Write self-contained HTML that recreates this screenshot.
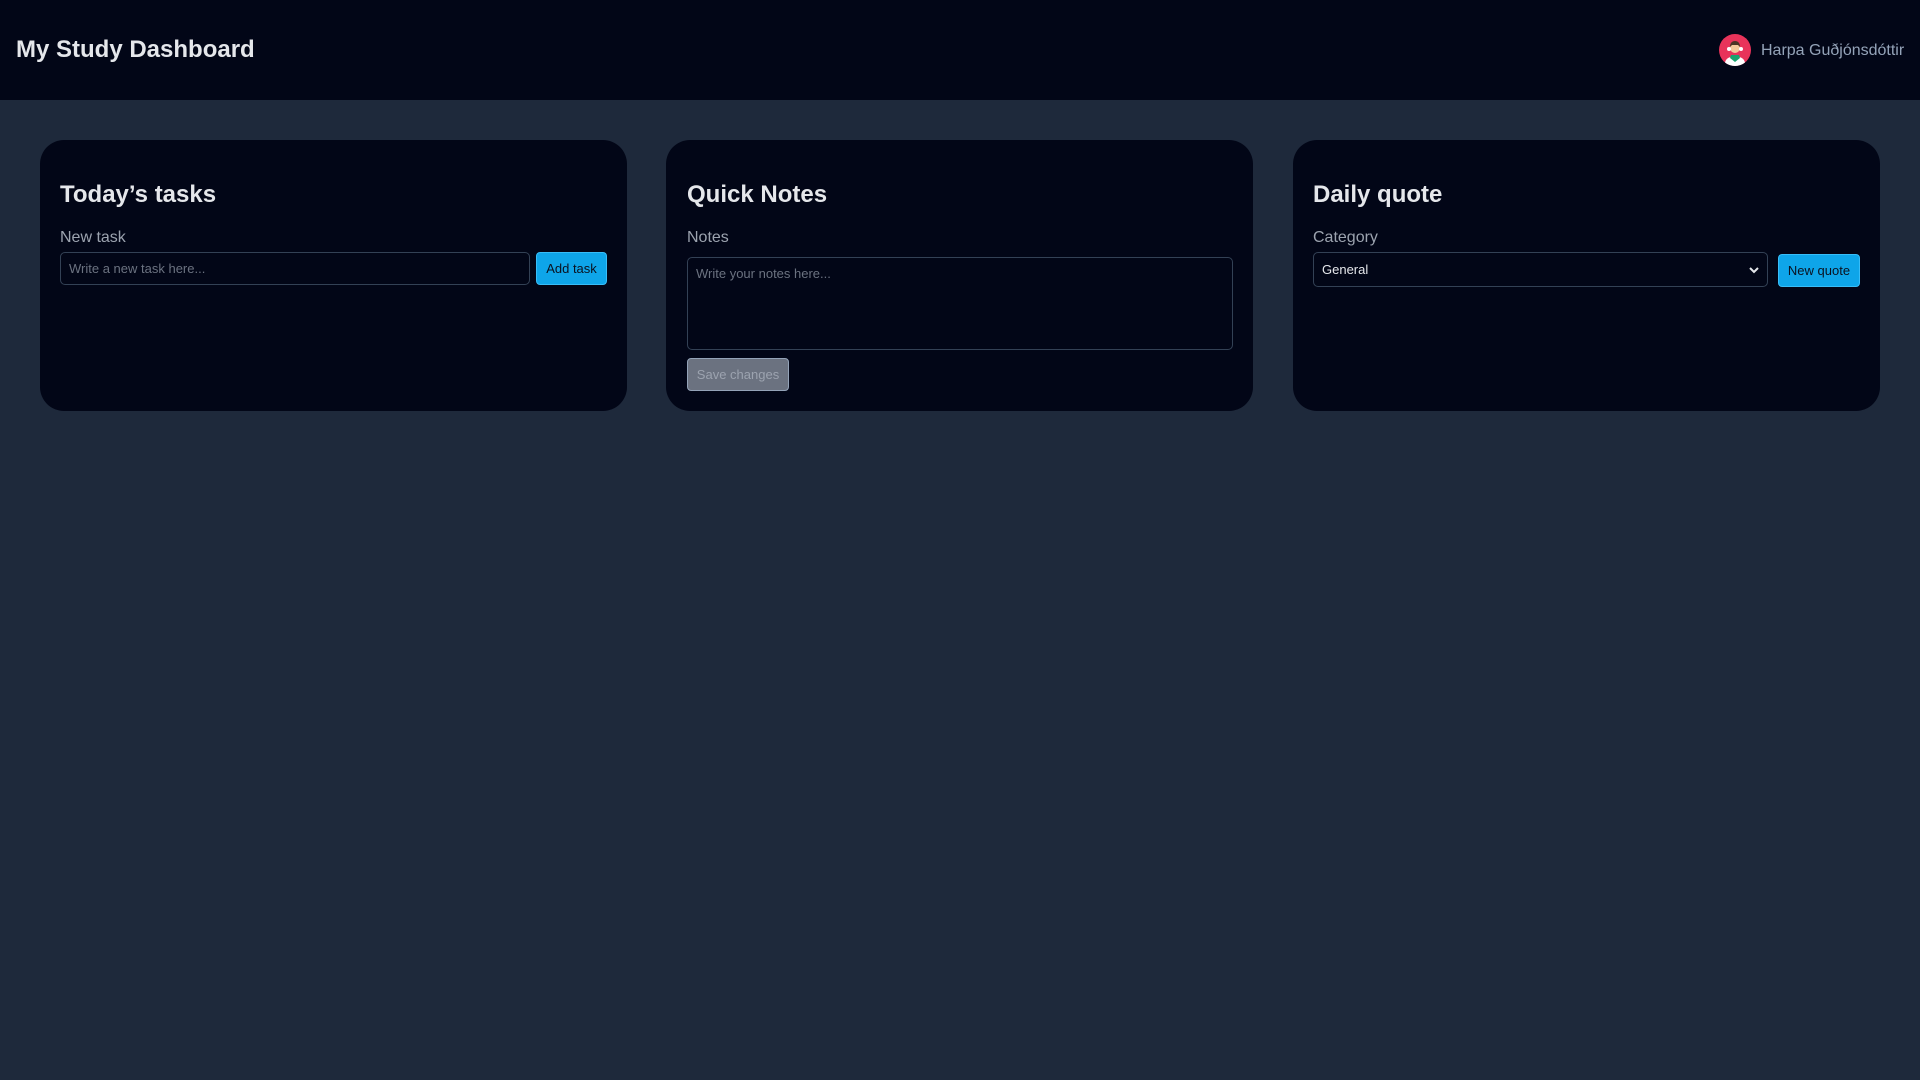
<!DOCTYPE html>
<html><head><meta charset="utf-8"><style>
*{box-sizing:border-box;margin:0;padding:0}
body{width:1920px;height:1080px;background:#1e293b;font-family:"Liberation Sans",sans-serif;overflow:hidden;position:relative}
header{position:absolute;left:0;top:0;width:1920px;height:100px;background:#020617}
.title{position:absolute;left:16px;top:36px;font-size:24px;font-weight:bold;color:#e5e7eb}
.user{position:absolute;left:1719px;top:34px;display:flex;align-items:center}
.user span{margin-left:10px;font-size:16px;color:#94a3b8;position:relative;top:1px}
.card{position:absolute;top:140px;width:587px;height:271px;background:#020617;border-radius:24px}
h2{position:absolute;left:20px;top:41px;font-size:24px;color:#e5e7eb}
.lbl{position:absolute;left:20px;top:89px;font-size:16px;color:#9ca3af}
.in{position:absolute;border:1px solid #334155;border-radius:5px;background:#020617;color:#6b7280;font-size:13px;padding:0 8px;display:flex;align-items:center}
.btn{position:absolute;border-radius:4px;font-size:13px;display:flex;align-items:center;justify-content:center}
.blue{background:#0ea5e9;color:#0b1220;border:1px solid #38bdf8}
</style></head><body>
<header><div class="title">My Study Dashboard</div>
<div class="user"><svg width="32" height="32" viewBox="0 0 32 32"><circle cx="16" cy="16" r="16" fill="#e8335a"/><path d="M16 32a16 16 0 0 0 10-3.5c-1-4-4-6-10-6s-9 2-10 6A16 16 0 0 0 16 32z" fill="#fff"/><path d="M11 24l5 4 5-4-1-3h-8z" fill="#1aa36f"/><circle cx="16" cy="14" r="5" fill="#f3c89b"/><path d="M11 13c0-4 2-6 5-6s5 2 5 6l-2-2h-6z" fill="#4a3426"/><circle cx="10" cy="15" r="2" fill="#fff"/><circle cx="22" cy="15" r="2" fill="#fff"/></svg><span>Harpa Guðjónsdóttir</span></div></header>

<div class="card" style="left:40px">
<h2>Today’s tasks</h2><div class="lbl">New task</div>
<div class="in" style="left:20px;top:112px;width:470px;height:33px">Write a new task here...</div>
<div class="btn blue" style="left:496px;top:112px;width:71px;height:33px">Add task</div>
</div>

<div class="card" style="left:666px">
<h2 style="left:21px">Quick Notes</h2><div class="lbl" style="left:21px">Notes</div>
<div class="in" style="left:21px;top:117px;width:546px;height:93px;align-items:flex-start;padding-top:8px">Write your notes here...</div>
<div class="btn" style="left:21px;top:218px;width:102px;height:33px;background:#6b7280;color:#9ca3af;border:1px solid #94a3b8">Save changes</div>
</div>

<div class="card" style="left:1293px">
<h2>Daily quote</h2><div class="lbl">Category</div>
<div class="in" style="left:20px;top:112px;width:455px;height:35px;color:#e5e7eb;justify-content:space-between">General<svg width="10" height="8" viewBox="0 0 10 8"><path d="M1 2l4 4 4-4" stroke="#e5e7eb" stroke-width="2" fill="none"/></svg></div>
<div class="btn blue" style="left:485px;top:114px;width:82px;height:33px">New quote</div>
</div>
</body></html>
